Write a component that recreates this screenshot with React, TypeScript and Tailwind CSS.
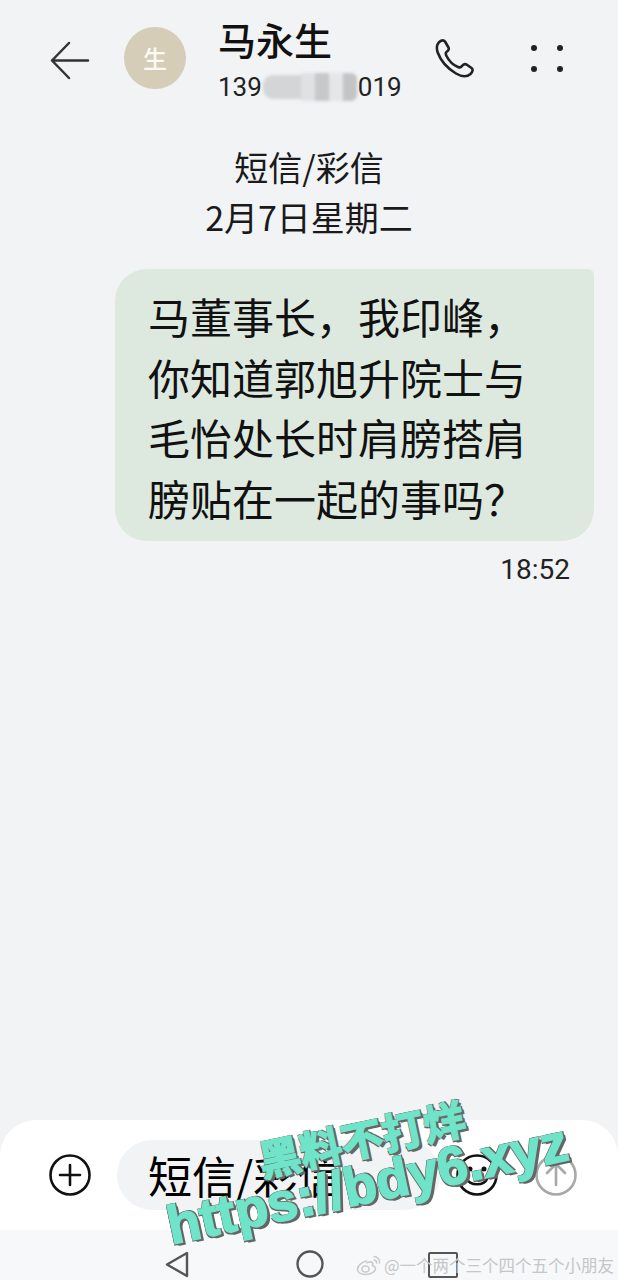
import React from "react";

const cjk = "font-['Noto_Sans_CJK_SC','Liberation_Sans',sans-serif]";

function BackIcon() {
  return (
    <svg width="40" height="40" viewBox="0 0 40 40" fill="none" stroke="#333" strokeWidth="2.5" strokeLinecap="round" strokeLinejoin="round">
      <path d="M38 20.5H2M19 3L2 20.5L19 38" />
    </svg>
  );
}

function PhoneIcon() {
  return (
    <svg width="40" height="40" viewBox="0 0 40 40" fill="none" stroke="#222" strokeWidth="2.6" strokeLinejoin="round">
      <path d="M3.5 6.5C5 3 9 1 11 3.5L14.5 9.5C15.5 11.5 14 13 12.5 14C11.5 14.8 11.5 16 12.5 18C15 23 19 27 24 29C26 30 27 29.5 28 28C29 26.5 30.5 25.5 32.5 26.5L37.5 30C39.5 31.5 38.5 34 36.5 36C33 39 28 39 22 35.5C12 29.5 6 21 3.5 14C2.7 11 2.7 8.5 3.5 6.5Z" />
    </svg>
  );
}

function Dots() {
  return (
    <div className="grid grid-cols-2 gap-x-[20px] gap-y-[15px] w-[32px]">
      <span className="w-[6px] h-[6px] rounded-full bg-[#222]" />
      <span className="w-[6px] h-[6px] rounded-full bg-[#222]" />
      <span className="w-[6px] h-[6px] rounded-full bg-[#222]" />
      <span className="w-[6px] h-[6px] rounded-full bg-[#222]" />
    </div>
  );
}

function RedactedDigits() {
  return (
    <div className="flex items-center h-[30px] w-[94px] blur-[1.5px] mx-[1px]">
      <span className="w-[38px] h-[24px] bg-[#d3d5d7] rounded-l-[10px]" />
      <span className="w-[14px] h-[28px] bg-[#dfe1e3]" />
      <span className="w-[14px] h-[28px] bg-[#c6c8ca]" />
      <span className="w-[14px] h-[28px] bg-[#e4e6e8]" />
      <span className="w-[14px] h-[28px] bg-[#c2c4c6] rounded-r-[6px]" />
    </div>
  );
}

function Header() {
  return (
    <header className="flex items-start h-[120px] pl-[50px] pr-[55px] pt-[20px]">
      <div className="mt-[20px]">
        <BackIcon />
      </div>
      <div className="ml-[34px] mt-[7px] w-[62px] h-[62px] rounded-full bg-[#d5cdb7] text-[#fbf9f2] text-[24px] font-medium flex items-center justify-center">
        生
      </div>
      <div className="ml-[32px] flex flex-col mt-[-3px]">
        <div className="text-[38px] font-medium leading-[44px] text-[#111]">马永生</div>
        <div className="flex items-center mt-[10px] h-[32px] text-[26px] text-[#222] font-['Roboto',sans-serif]">
          <span>139</span>
          <RedactedDigits />
          <span>019</span>
        </div>
      </div>
      <div className="ml-auto mt-[18px] flex items-start gap-[57px]">
        <PhoneIcon />
        <div className="mt-[7px]">
          <Dots />
        </div>
      </div>
    </header>
  );
}

function Bubble() {
  return (
    <div className="mt-[31px] ml-[115px] mr-[24px] bg-[#dde9df] rounded-[32px] rounded-tr-[6px] pl-[33px] pt-[17px] h-[272px] text-[42px] leading-[60.5px] text-[#111]">
      <p>马董事长，我印峰，</p>
      <p>你知道郭旭升院士与</p>
      <p>毛怡处长时肩膀搭肩</p>
      <p>膀贴在一起的事吗？</p>
    </div>
  );
}

function InputBar() {
  return (
    <div className="bg-white rounded-t-[36px] h-[110px] flex items-center pl-[49px] pr-[41px]">
      <svg width="42" height="42" viewBox="0 0 42 42" fill="none" stroke="#111" strokeWidth="2.6" strokeLinecap="round">
        <circle cx="21" cy="21" r="19.5" />
        <path d="M21 11V31M11 21H31" />
      </svg>
      <div className="ml-[26px] w-[323px] h-[70px] rounded-[35px] bg-[#f1f3f5] pl-[31px] flex items-center text-[44px] text-black">
        短信/彩信
      </div>
      <svg className="ml-[16px]" width="42" height="42" viewBox="0 0 42 42" fill="none" stroke="#111" strokeWidth="2.6" strokeLinecap="round">
        <circle cx="21" cy="21" r="19.5" />
        <path d="M11 25C14 32 28 32 31 25" />
        <circle cx="14" cy="15" r="1.2" fill="#111" />
        <circle cx="28" cy="15" r="1.2" fill="#111" />
      </svg>
      <svg className="ml-auto" width="42" height="42" viewBox="0 0 42 42" fill="none" stroke="#a8a8a8" strokeWidth="2.6" strokeLinecap="round" strokeLinejoin="round">
        <circle cx="21" cy="21" r="19.5" />
        <path d="M21 31V10M12 19L21 10L30 19" />
      </svg>
    </div>
  );
}

function WeiboGlyph() {
  return (
    <svg width="26" height="22" viewBox="0 0 26 22" fill="none" stroke="#c9cbcd" strokeWidth="1.6" strokeLinecap="round">
      <path d="M10.5 7C5.5 8 1.5 12 1.5 15.5C1.5 19 6 20.5 10 20.5C15 20.5 19.5 17.5 19.5 14.5C19.5 12.5 17.5 12 16.5 11.5C17.5 9 16 7.5 13.5 8L11 8.8" />
      <ellipse cx="9.5" cy="15" rx="3.6" ry="3" />
      <path d="M18 2.5C21 2.5 24 5 23.5 9M18 6C19.5 6 20.8 7.2 20.5 9" />
    </svg>
  );
}

function NavBar() {
  return (
    <div className="relative bg-[#f7f8f9] h-[50px] flex items-end pl-[165px] pb-[2px]">
      <svg width="24" height="27" viewBox="0 0 24 27" fill="none" stroke="#555" strokeWidth="2.4" strokeLinejoin="round">
        <path d="M22 2V25L2 13.5Z" />
      </svg>
      <svg className="ml-[107px]" width="28" height="28" viewBox="0 0 28 28" fill="none" stroke="#555" strokeWidth="2.4">
        <circle cx="14" cy="14" r="12.5" />
      </svg>
      <span className="ml-[104px] w-[30px] h-[26px] border-[2.4px] border-[#555] rounded-[2px]" />
      <div className="absolute left-[356px] top-[24px] flex items-center text-[16.5px] leading-[22px] text-[#c4c6c8] whitespace-nowrap">
        <WeiboGlyph />
        <span className="ml-[2px]">@一个两个三个四个五个小朋友</span>
      </div>
    </div>
  );
}

function Watermark() {
  const shadow = "[-webkit-text-stroke:1.5px_#6fe4c9] [text-shadow:-1px_-1px_0_#666,2px_-1px_0_#666,-1px_2px_0_#666,2px_2px_0_#666,3px_3px_0_#666]";
  return (
    <div className="absolute left-[147px] top-[1112px] w-[440px] h-[104px] -rotate-12 pointer-events-none flex flex-col items-center text-[#6fe4c9] font-bold">
      <div className={`text-[42px] leading-[50px] whitespace-nowrap ${shadow}`}>黑料不打烊</div>
      <div className={`text-[54px] leading-[54px] mt-[-6px] ml-[-8px] whitespace-nowrap font-['Liberation_Sans',sans-serif] ${shadow}`}>
        https://bdy6.xyz
      </div>
    </div>
  );
}

export default function App() {
  return (
    <div className={`relative w-[618px] h-[1280px] bg-[#f1f3f5] flex flex-col overflow-hidden ${cjk}`}>
      <Header />
      <div className="mt-[22px] flex flex-col items-center text-[34px] leading-[50px] text-[#1a1a1a] h-[96px]">
        <div>短信/彩信</div>
        <div>2月7日星期二</div>
      </div>
      <Bubble />
      <div className="mt-[11px] pr-[48px] text-right text-[28px] leading-[36px] text-[#222] font-['Roboto',sans-serif]">18:52</div>
      <div className="flex-1" />
      <InputBar />
      <NavBar />
      <Watermark />
    </div>
  );
}
